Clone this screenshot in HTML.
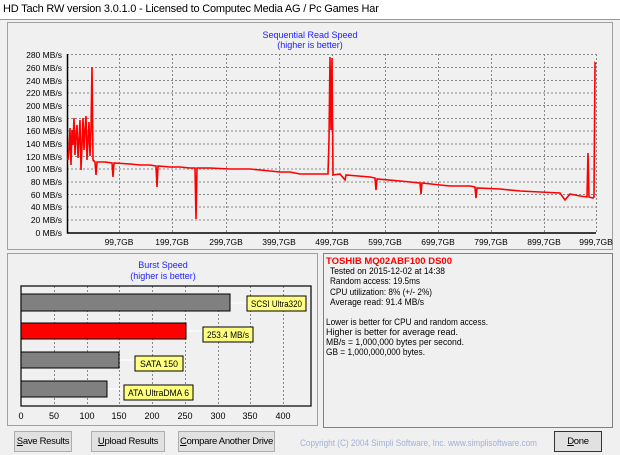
<!DOCTYPE html><html><head><style>
body{margin:0;width:620px;height:455px;background:#f0f0f0;font-family:"Liberation Sans",sans-serif;overflow:hidden;position:relative}
.btn{position:absolute;top:431px;height:21px;border:1px solid #adadad;background:#e1e1e1;font-size:9.5px;line-height:20px;text-align:center;box-sizing:border-box;white-space:nowrap;letter-spacing:-0.3px}
</style></head><body>
<div style="position:absolute;left:0;top:0;width:620px;height:19px;background:#fff;font-size:11px;line-height:18px;padding-left:3px;color:#000;white-space:nowrap;letter-spacing:-0.2px">HD Tach RW version 3.0.1.0 - Licensed to Computec Media AG / Pc Games Har</div>
<svg width="620" height="455" style="position:absolute;left:0;top:0" font-family="Liberation Sans, sans-serif">
<rect x="0" y="19" width="620" height="1" fill="#999"/>
<rect x="7.5" y="22.5" width="605" height="227" fill="#f0f0f0" stroke="#a0a0a0"/>
<text x="310" y="38" font-size="9" fill="#2020ff" text-anchor="middle">Sequential Read Speed</text>
<text x="310" y="48" font-size="9" fill="#2020ff" text-anchor="middle">(higher is better)</text>
<g stroke="#888" stroke-dasharray="2,2" stroke-width="1">
<path d="M67 54.5H596M67 67.5H596M67 80.5H596M67 93H596M67 105.5H596M67 118.5H596M67 131H596M67 144H596M67 156.5H596M67 169H596M67 182H596M67 194.5H596M67 207H596M67 220H596"/>
<path d="M119.5 54V232M172.5 54V232M226.5 54V232M279.5 54V232M332.5 54V232M385.5 54V232M438.5 54V232M491.5 54V232M544.5 54V232M596.5 54V232"/>
</g>
<path d="M67.5 54V233H596" stroke="#000" stroke-width="1.5" fill="none"/>
<g font-size="8.5" fill="#000" text-anchor="end">
<text x="62" y="58">280 MB/s</text><text x="62" y="71">260 MB/s</text><text x="62" y="84">240 MB/s</text><text x="62" y="96">220 MB/s</text><text x="62" y="109">200 MB/s</text><text x="62" y="122">180 MB/s</text><text x="62" y="134">160 MB/s</text><text x="62" y="147">140 MB/s</text><text x="62" y="160">120 MB/s</text><text x="62" y="172">100 MB/s</text><text x="62" y="185">80 MB/s</text><text x="62" y="198">60 MB/s</text><text x="62" y="210">40 MB/s</text><text x="62" y="223">20 MB/s</text><text x="62" y="236">0 MB/s</text>
</g>
<g font-size="8.5" fill="#000" text-anchor="middle">
<text x="119" y="245">99,7GB</text><text x="172" y="245">199,7GB</text><text x="226" y="245">299,7GB</text><text x="279" y="245">399,7GB</text><text x="332" y="245">499,7GB</text><text x="385" y="245">599,7GB</text><text x="438" y="245">699,7GB</text><text x="491" y="245">799,7GB</text><text x="544" y="245">899,7GB</text><text x="596" y="245">999,7GB</text>
</g>
<polyline fill="none" stroke="#ff0000" stroke-width="1.6" points="68,160 69,150 70,128 71,165 72,130 73,145 74,118 75,155 76,135 77,125 78,158 79,140 80,120 81,170 82,145 83,118 84,150 85,130 86,116 87,160 88,140 89,122 90,156 91,130 92,67 93,160 95,162 96,175 97,162 105,162 112,163 113,177 114,163 130,164 140,165 150,165 156,166 157,187 158,166 170,167 180,167 190,168 195,168 196,219 197,168 210,168 230,169 250,169 260,170 270,171 280,172 290,172 300,174 310,174 320,174 328,174 329,140 330,57 331,130 332,58 333,175 340,174 345,180 346,175 370,177 375,178 376,190 377,179 400,181 420,183 421,194 422,183 440,185 450,186 470,186 475,187 476,198 477,188 500,189 520,191 540,192 560,193 565,200 570,194 580,196 587,197 588,153 589,197 593,198 594,197 595,63 596,64"/>
<rect x="7.5" y="253.5" width="310" height="172" fill="#f0f0f0" stroke="#a0a0a0"/>
<text x="163" y="268" font-size="9" fill="#2020ff" text-anchor="middle">Burst Speed</text>
<text x="163" y="279" font-size="9" fill="#2020ff" text-anchor="middle">(higher is better)</text>
<g stroke="#888" stroke-dasharray="2,2"><path d="M54.5 286V406M87.5 286V406M119.5 286V406M152.5 286V406M185.5 286V406M218.5 286V406M250.5 286V406M283.5 286V406"/></g>
<rect x="21" y="286" width="290" height="120" fill="none" stroke="#000" stroke-width="1.2"/>
<g stroke="#fff"><path d="M230 303H248M186 331H204M119 360H136M107 389H124"/></g>
<rect x="21" y="294" width="209" height="17" fill="#808080" stroke="#000"/>
<rect x="21" y="323" width="165" height="16" fill="#ff0000" stroke="#000"/>
<rect x="21" y="352" width="98" height="16" fill="#808080" stroke="#000"/>
<rect x="21" y="381" width="86" height="16" fill="#808080" stroke="#000"/>
<g font-size="9" fill="#000">
<rect x="247" y="296" width="59" height="15" fill="#ffff80" stroke="#000"/><text x="251" y="307" textLength="51" lengthAdjust="spacingAndGlyphs">SCSI Ultra320</text>
<rect x="203" y="327" width="50" height="15" fill="#ffff80" stroke="#000"/><text x="207" y="338" textLength="42" lengthAdjust="spacingAndGlyphs">253.4 MB/s</text>
<rect x="135" y="356" width="48" height="15" fill="#ffff80" stroke="#000"/><text x="140" y="367" textLength="38" lengthAdjust="spacingAndGlyphs">SATA 150</text>
<rect x="124" y="385" width="69" height="15" fill="#ffff80" stroke="#000"/><text x="128" y="396" textLength="61" lengthAdjust="spacingAndGlyphs">ATA UltraDMA 6</text>
</g>
<g font-size="9" fill="#000" text-anchor="middle"><text x="21" y="419">0</text><text x="54" y="419">50</text><text x="87" y="419">100</text><text x="119" y="419">150</text><text x="152" y="419">200</text><text x="185" y="419">250</text><text x="218" y="419">300</text><text x="250" y="419">350</text><text x="283" y="419">400</text></g>
<rect x="323.5" y="253.5" width="289" height="174" fill="#f0f0f0" stroke="#808080"/>
<text x="326" y="264" font-size="9.5" font-weight="bold" fill="#ff0000" textLength="126" lengthAdjust="spacingAndGlyphs">TOSHIB MQ02ABF100 DS00</text>
<g font-size="9" fill="#000"><text x="330" y="274" textLength="115" lengthAdjust="spacingAndGlyphs">Tested on 2015-12-02 at 14:38</text><text x="330" y="284" textLength="90" lengthAdjust="spacingAndGlyphs">Random access: 19.5ms</text><text x="330" y="295" textLength="102" lengthAdjust="spacingAndGlyphs">CPU utilization: 8% (+/- 2%)</text><text x="330" y="305" textLength="94" lengthAdjust="spacingAndGlyphs">Average read: 91.4 MB/s</text>
<text x="326" y="325" textLength="162" lengthAdjust="spacingAndGlyphs">Lower is better for CPU and random access.</text><text x="326" y="335" textLength="132" lengthAdjust="spacingAndGlyphs">Higher is better for average read.</text><text x="326" y="345" textLength="138" lengthAdjust="spacingAndGlyphs">MB/s = 1,000,000 bytes per second.</text><text x="326" y="355" textLength="99" lengthAdjust="spacingAndGlyphs">GB = 1,000,000,000 bytes.</text></g>
<text x="300" y="446" font-size="9" fill="#a0b0d8" textLength="237" lengthAdjust="spacingAndGlyphs">Copyright (C) 2004 Simpli Software, Inc. www.simplisoftware.com</text>
</svg>
<div class="btn" style="left:14px;width:58px"><u>S</u>ave Results</div>
<div class="btn" style="left:91px;width:74px"><u>U</u>pload Results</div>
<div class="btn" style="left:178px;width:97px"><u>C</u>ompare Another Drive</div>
<div class="btn" style="left:554px;width:48px;border:1px solid #333"><u>D</u>one</div>
</body></html>
